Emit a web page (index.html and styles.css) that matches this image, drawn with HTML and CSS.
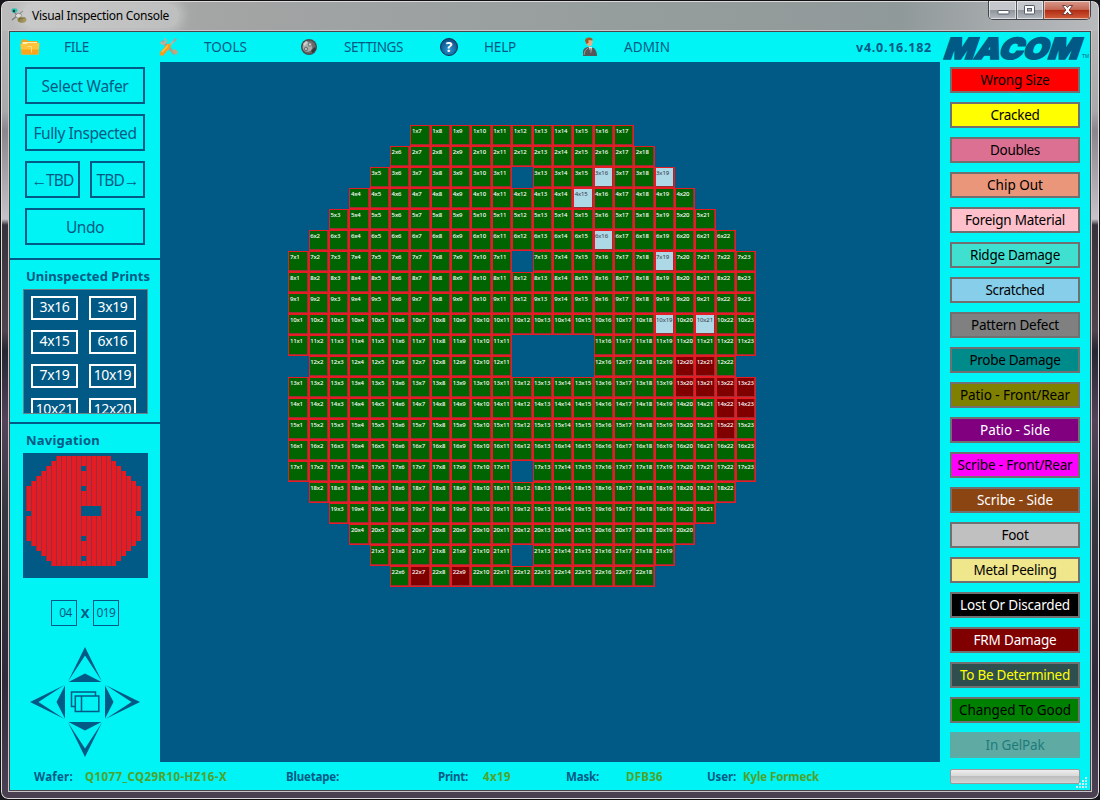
FILE: index.html
```html
<!DOCTYPE html>
<html lang="en">
<head>
<meta charset="utf-8">
<title>Visual Inspection Console</title>
<link rel="stylesheet" href="styles.css">
</head>
<body>
<div class="window">
  <header class="titlebar">
    <svg class="app-icon" width="17" height="17" viewBox="0 0 17 17">
      <path d="M2 13 13 4M4 5l8 8" stroke="#777" stroke-width="1.6"/>
      <ellipse cx="4.5" cy="3.5" rx="3" ry="2.3" fill="#16bfa5"/><circle cx="4" cy="4" r="1.2" fill="#123"/>
      <path d="M5 9l3-3 4 2-3 4z" fill="#ddd" stroke="#555" stroke-width=".6"/>
      <ellipse cx="12" cy="12.8" rx="4.5" ry="3" fill="#7b6a12"/><path d="M9 12l6-1" stroke="#3c3508"/>
    </svg>
    <span class="title"><span class="fit" data-w="137">Visual Inspection Console</span></span>
    <div class="controls">
      <div class="ctl"><svg width="28" height="17" viewBox="0 0 28 17"><rect x="9" y="8.500" width="11" height="3.500" rx=".6" fill="#fff" stroke="#555b68"/></svg></div>
      <div class="ctl"><svg width="26" height="17" viewBox="0 0 26 17"><rect x="7.500" y="3.500" width="10" height="8.500" rx=".7" fill="#fff" stroke="#555b68"/><rect x="10.500" y="6.500" width="4" height="2.500" fill="#a9adb5" stroke="#555b68"/></svg></div>
      <div class="ctl ctl-close"><svg width="46" height="17" viewBox="0 0 46 17"><path d="M18.500 3.500h3.200l1.800 2 1.800-2h3.200L25.200 8l3.300 4.500h-3.200l-1.800-2.200-1.800 2.200h-3.200L21.800 8z" fill="#fff" stroke="#5e3434" stroke-width=".9"/></svg></div>
    </div>
  </header>

  <div class="client">
    <nav class="menu">
      <div class="menu-item m-file">
        <svg width="20" height="18" viewBox="0 0 20 18"><path d="M1 3 2 1.500h5l1 1.500h9.500l.5 2V15H1.500z" fill="#e8a52a"/><path d="M2.500 4h14.500v3H2.500z" fill="#fff3b8"/><path d="M.3 6h6.200l1-1h12l-1 11.500H1.500z" fill="#ffc43a"/><path d="M.9 11.500h18l-.5 5H1.500z" fill="#fba51a"/><path d="M7.500 8.500h4v6" stroke="#ffdf80" fill="none"/></svg>
        <span class="fit" data-w="25">FILE</span>
      </div>
      <div class="menu-item m-tools">
        <svg width="20" height="20" viewBox="0 0 20 20"><path d="M3 4l13 13" stroke="#a9a08c" stroke-width="3"/><path d="M1 5q0 3 4 3l3-3Q8 1 5 1l1 3-2 1z" fill="#b5b2a5"/><path d="M13 14l4 4 2-3-3-3z" fill="#c7a675"/><path d="M10 9 17 2" stroke="#b4b4a8" stroke-width="2"/><path d="M16 1l2 1-2 3-2-1z" fill="#a0a69a"/><path d="M9.500 9 3 16.500" stroke="#f79d1e" stroke-width="4.400" stroke-linecap="round"/><path d="M9 8.500 3 15" stroke="#ffc54a" stroke-width="1.200"/></svg>
        <span class="fit" data-w="43">TOOLS</span>
      </div>
      <div class="menu-item m-settings">
        <svg width="18" height="18" viewBox="0 0 18 18"><circle cx="9" cy="9" r="8" fill="#4b4c4e"/><circle cx="9" cy="9" r="6.600" fill="#67696a"/><circle cx="7.500" cy="9" r="4.800" fill="#a9abab"/><circle cx="6" cy="11" r="2" fill="#65686a"/><circle cx="6" cy="11" r=".9" fill="#ddd"/><circle cx="10" cy="6.500" r="2.200" fill="#7c7e80"/><circle cx="10" cy="6.500" r="1" fill="#ddd"/><path d="M3 6l3-3 2 1-3 4z" fill="#d0d0d0"/><path d="M11 13l4-4 1 2-3 4z" fill="#333"/></svg>
        <span class="fit" data-w="59">SETTINGS</span>
      </div>
      <div class="menu-item m-help">
        <span class="help-dot">?</span>
        <span class="fit" data-w="32">HELP</span>
      </div>
      <div class="menu-item m-admin">
        <svg width="16" height="20" viewBox="0 0 16 20"><path d="M1 19v-5q1-4 6-4l5 1q3 3 3 8z" fill="#55585a"/><path d="M2 18q0-5 4-7" stroke="#9a9a98" fill="none"/><path d="M6.500 10h3.500l-1 6z" fill="#e8e8e8"/><path d="M8 11l1 5" stroke="#777"/><path d="M3.500 3.500Q4 .5 8 .8q3 .4 2.700 4.200-.4 4-2.800 4.400Q4 9 3.500 3.500z" fill="#e2b28c"/><path d="M3 4Q3 0 8 .5q3 .5 2.500 3L6.500 3v3L4.500 7z" fill="#9b5a26"/></svg>
        <span class="fit" data-w="46">ADMIN</span>
      </div>
      <div class="version"><span class="fit" data-w="76">v4.0.16.182</span></div>
      <svg class="logo" width="150" height="30" viewBox="0 0 150 30">
        <text class="logo-text" transform="translate(2.500 26.500) skewX(-19)" textLength="135" lengthAdjust="spacingAndGlyphs">MACOM</text>
        <text class="logo-tm" x="142" y="26" textLength="7" lengthAdjust="spacingAndGlyphs">TM</text>
      </svg>
    </nav>

    <div class="body">
      <aside class="left">
        <section class="actions">
          <button class="btn"><span class="fit" data-w="87">Select Wafer</span></button>
          <button class="btn"><span class="fit" data-w="103">Fully Inspected</span></button>
          <div class="btn-pair">
            <button class="btn"><span class="fit" data-w="42">←TBD</span></button>
            <button class="btn"><span class="fit" data-w="42">TBD→</span></button>
          </div>
          <button class="btn"><span class="fit" data-w="38">Undo</span></button>
        </section>
        <section class="prints">
          <h2><span class="fit" data-w="124">Uninspected Prints</span></h2>
          <div class="print-list">
            <span class="print">3x16</span><span class="print">3x19</span>
            <span class="print">4x15</span><span class="print">6x16</span>
            <span class="print">7x19</span><span class="print">10x19</span>
            <span class="print">10x21</span><span class="print">12x20</span>
          </div>
        </section>
        <section class="navigation">
          <h2><span class="fit" data-w="74">Navigation</span></h2>
          <svg class="mini-map" id="mini-map" width="125" height="125" viewBox="0 0 125 125"></svg>
          <div class="coords"><span class="coord first">04</span><b>X</b><span class="coord">019</span></div>
          <svg class="pad" width="110" height="110" viewBox="0 0 110 110">
            <g fill="#005a85">
              <path d="M55 0 72 34.500 55 8.500 38 34.500z"/><path d="M38.500 35 55 26.500 71.500 35z"/>
              <path d="M55 110 72 75.500 55 101.500 38 75.500z"/><path d="M38.500 75 55 83.500 71.500 75z"/>
              <path d="M0 55 34.500 38 8.500 55 34.500 72z"/><path d="M35 38.500 26.500 55 35 71.500z"/>
              <path d="M110 55 75.500 38 101.500 55 75.500 72z"/><path d="M75 38.500 83.500 55 75 71.500z"/>
            </g>
            <g fill="none" stroke="#005a85" stroke-width="1.500"><path d="M45 59.500h-3.500V45h24v4"/><rect x="45.300" y="49" width="23.500" height="15.500"/><path d="M51.500 49v15.500"/></g>
          </svg>
        </section>
      </aside>
      <main class="canvas"><div class="wafer" id="wafer"></div></main>
      <aside class="right" id="defects"></aside>
    </div>

    <footer class="status">
      <span class="s-label" style="width:51px"><span class="fit" data-w="39">Wafer:</span></span>
      <span class="s-value" style="width:201px"><span class="fit" data-w="142">Q1077_CQ29R10-HZ16-X</span></span>
      <span class="s-label" style="width:152px"><span class="fit" data-w="53">Bluetape:</span></span>
      <span class="s-label" style="width:45px"><span class="fit" data-w="30">Print:</span></span>
      <span class="s-value" style="width:83px"><span class="fit" data-w="28">4x19</span></span>
      <span class="s-label" style="width:60px"><span class="fit" data-w="33">Mask:</span></span>
      <span class="s-value" style="width:81px"><span class="fit" data-w="37">DFB36</span></span>
      <span class="s-label" style="width:36px"><span class="fit" data-w="29">User:</span></span>
      <span class="s-value"><span class="fit" data-w="76">Kyle Formeck</span></span>
      <div class="status-end"><div class="progress"></div>
        <svg class="grip" width="12" height="12" viewBox="0 0 12 12" fill="#cdeff0"><path d="M9 0h2v2H9zM9 3h2v2H9zM9 6h2v2H9zM9 9h2v2H9zM6 3h2v2H6zM6 6h2v2H6zM6 9h2v2H6zM3 6h2v2H3zM3 9h2v2H3zM0 9h2v2H0z"/></svg>
      </div>
    </footer>
  </div>
</div>
<script src="app.js"></script>
</body>
</html>
```
FILE: styles.css
```css
* { box-sizing: border-box; }
body { margin: 0; background: #17161c; font-family: "Noto Sans", "Open Sans", sans-serif; color: #005a85; }
.window {
  width: 1100px; height: 800px; padding: 0 8px 8px; overflow: hidden;
  display: flex; flex-direction: column;
  border: 1px solid #111; border-radius: 8px;
  background: linear-gradient(#b9b9b9 0, #a9a9ab 110px, #8b858c 130px, #c7c3c8 218px, #37323b 224px, #50444e 330px, #242632 350px, #54435a 420px, #353740 510px, #30293a 680px, #4a4051 790px);
  box-shadow: inset 0 0 0 1px #dcdadc;
}
.titlebar {
  height: 29px; margin: 1px -7px 0; padding-left: 8px; flex: none; display: flex; align-items: flex-start;
  border-radius: 7px 7px 0 0;
  background: linear-gradient(90deg, #bcbcbc, #a4a5a5 18%, #969e9d 55%, #909999 82%, #a9adaf 92%, #b8babc);
}
.app-icon { margin-top: 5px; }
.title { margin: 1px 0 0 -5px; padding: 2px 10px; height: 25px; line-height: 22px; font-size: 12px; color: #000; border-radius: 12px; background: rgba(225,225,225,.4); box-shadow: 0 0 10px 5px rgba(225,225,225,.4); }
.controls { margin: -1px 7px 0 auto; display: flex; height: 19px; border: 1px solid #42454c; border-top: 0; border-radius: 0 0 5px 5px; overflow: hidden; }
.ctl { width: 28px; border-right: 1px solid #55585e; box-shadow: inset 0 0 0 1px rgba(255,255,255,.55); background: linear-gradient(#c4c7cb 48%, #8e949a 50%, #b4babf); }
.ctl svg { display: block; margin: 1px auto 0; }
.ctl:nth-child(2) { width: 27px; }
.ctl-close { width: 46px; border-right: 0; background: linear-gradient(#d8998b 0, #c56956 47%, #ae2b12 50%, #d35d3c); }
.client { width: 1082px; height: 760px; flex: none; display: flex; flex-direction: column; border: 1px solid #4c4448; background: #00f4f6; box-shadow: 0 0 0 1px #c9c6c9; }
.fit { display: inline-block; white-space: nowrap; }

.menu { height: 30px; flex: none; display: flex; align-items: center; font-size: 13.500px; }
.menu-item { display: flex; align-items: center; width: 140px; }
.menu-item > .fit { margin-left: auto; }
.m-file { padding-left: 10px; width: 79px; }
.m-tools { width: 158px; padding-left: 70px; }
.m-settings { width: 156px; padding-left: 53px; }
.m-help { width: 113px; padding-left: 37px; }
.m-admin { width: 154px; padding-left: 66px; }
.help-dot { width: 18px; height: 18px; border: 1px solid #092c50; border-radius: 50%; background: radial-gradient(circle at 50% 65%, #2797d3, #124f86 75%); color: #fff; font: bold 14px/16px "Open Sans", sans-serif; text-align: center; }
.version { margin-left: auto; margin-right: 8px; font-size: 12.500px; font-weight: bold; }
.logo { display: block; flex: none; overflow: visible; }
.logo-text { font: 900 29px Inter, sans-serif; fill: #005a85; stroke: #005a85; stroke-width: 1.600; }
.logo-tm { font: 6px "Liberation Sans", sans-serif; fill: #005a85; }

.body { height: 700px; display: flex; flex: none; }
.left { width: 150px; }
.actions { height: 198px; padding: 5px 15px 0; border-bottom: 2px solid #005a85; display: flex; flex-direction: column; gap: 10px; }
.btn { height: 37px; width: 100%; padding: 0; border: 2px solid #005a85; background: none; color: #005a85; font: 15.500px "Noto Sans", sans-serif; white-space: nowrap; }
.btn-pair { display: flex; gap: 10px; }
h2 { margin: 0 0 0 16px; font-size: 13px; line-height: 20px; font-weight: bold; white-space: nowrap; }
.prints { height: 164px; padding-top: 6px; border-bottom: 2px solid #005a85; }
.print-list { width: 125px; height: 125px; margin: 3px 0 0 13px; padding: 6px 0 0 7px; border: 1px solid #697f86; background: #005a85; overflow: hidden; display: grid; grid-template-columns: 47px 47px; grid-auto-rows: 24px; gap: 10px 11px; align-content: start; }
.print { border: 2px solid #fff; color: #fff; font-size: 14px; line-height: 18px; text-align: center; letter-spacing: -.4px; }
.navigation { padding-top: 6px; }
.mini-map { display: block; margin: 3px 0 0 13px; background: #005a85; }
.coords { height: 26px; margin: 22px 0 0 41px; display: flex; align-items: center; }
.coord { width: 26px; height: 26px; border: 1px solid #005a85; font-size: 12px; line-height: 24px; text-align: center; letter-spacing: -.6px; }
.coord.first { padding-left: 3px; }
.coords b { width: 16px; text-align: center; font-size: 13px; }
.pad { display: block; margin: 21px 0 0 20px; }

.canvas { width: 780px; background: #005a85; padding: 63px 0 0 128.400px; }
.wafer { width: 468px; height: 462px; display: grid; grid-template-columns: repeat(23, 20.350px); grid-template-rows: repeat(22, 21px); }
.die { border: 1px solid #e61c24; background: #006400; color: #fff; font-size: 6px; line-height: 10px; padding-left: .5px; font-weight: 500; letter-spacing: -.15px; white-space: nowrap; box-shadow: inset -1px -1px 0 #963034; }
.die.open { background: #add8e6; color: #334; font-weight: 400; }
.die.bad { background: #800000; }

.right { width: 150px; padding: 5px 10px 0; display: flex; flex-direction: column; gap: 9px; }
.defect { height: 26px; flex: none; border: 2px solid #707070; font-size: 13.500px; line-height: 22px; text-align: center; white-space: nowrap; }
.defect.off { opacity: .5; border-color: #b3665a; }

.status { height: 28px; padding-left: 24px; display: flex; align-items: center; font-size: 11.500px; font-weight: bold; }
.s-label, .s-value { flex: none; white-space: nowrap; }
.s-value { color: #4ea32a; }
.status-end { position: relative; width: 150px; height: 28px; margin-left: auto; padding: 7px 10px 0; }
.progress { height: 15px; border: 1px solid #999; border-radius: 2px; background: linear-gradient(#eee, #d6d6d6 48%, #bebebe 50%, #d3d3d3); }
.grip { position: absolute; right: 2px; bottom: 1px; }
```
FILE: app.js
```js
const spans = [
  [7,17],[6,18],[5,19],[4,20],[3,21],[2,22],[1,23],[1,23],[1,23],[1,23],[1,23],
  [2,22],[1,23],[1,23],[1,23],[1,23],[1,23],[2,22],[3,21],[4,20],[5,19],[6,18]
];
const open = new Set(['3x16','3x19','4x15','6x16','7x19','10x19','10x21']);
const bad = new Set(['12x20','12x21','13x20','13x21','13x22','13x23','14x22','14x23','15x22','22x7','22x9']);
const isHole = (r, c) =>
  (c === 12 && [3, 7, 17, 21].includes(r)) || ((r === 11 || r === 12) && c >= 12 && c <= 15);

const wafer = document.getElementById('wafer');
let mini = '';
spans.forEach(([from, to], i) => {
  const r = i + 1;
  for (let c = from; c <= to; c++) {
    if (isHole(r, c)) continue;
    const id = r + 'x' + c;
    const die = document.createElement('div');
    die.className = 'die' + (open.has(id) ? ' open' : bad.has(id) ? ' bad' : '');
    die.style.gridArea = r + ' / ' + c;
    die.textContent = id;
    wafer.append(die);
    mini += `<rect x="${3 + (c - 1) * 5}" y="${3 + i * 5}" width="1" height="5" fill="#92303f"/>` +
            `<rect x="${4 + (c - 1) * 5}" y="${3 + i * 5}" width="4" height="5" fill="#e61c24"/>`;
  }
});
document.getElementById('mini-map').innerHTML = mini;

const defects = [
  ['Wrong Size', '#ff0000', '#000', 69], ['Cracked', '#ffff00', '#000', 49],
  ['Doubles', '#db7093', '#000', 50], ['Chip Out', '#e9967a', '#000', 56],
  ['Foreign Material', '#ffc0cb', '#000', 100], ['Ridge Damage', '#40e0d0', '#000', 90],
  ['Scratched', '#87ceeb', '#000', 59], ['Pattern Defect', '#808080', '#000', 88],
  ['Probe Damage', '#008b8b', '#000', 91], ['Patio - Front/Rear', '#808000', '#000', 110],
  ['Patio - Side', '#800080', '#fff', 70], ['Scribe - Front/Rear', '#ff00ff', '#000', 115],
  ['Scribe - Side', '#8b4513', '#fff', 76], ['Foot', '#c0c0c0', '#000', 27],
  ['Metal Peeling', '#f0e68c', '#000', 83], ['Lost Or Discarded', '#000000', '#fff', 110],
  ['FRM Damage', '#800000', '#fff', 83], ['To Be Determined', '#2f4f4f', '#ffff00', 110],
  ['Changed To Good', '#008000', '#000', 112], ['In GelPak', '#bd6350', '#400', 59]
];
const list = document.getElementById('defects');
defects.forEach(([name, bg, fg, w]) => {
  const el = document.createElement('div');
  el.className = 'defect' + (name === 'In GelPak' ? ' off' : '');
  el.style.background = bg;
  el.style.color = fg;
  el.innerHTML = `<span class="fit" data-w="${w}">${name}</span>`;
  list.append(el);
});

// Spread each label over its intended width through letter spacing.
document.querySelectorAll('.fit').forEach(el => {
  const n = el.textContent.length;
  const gap = (Number(el.dataset.w) - el.getBoundingClientRect().width) / n;
  el.style.letterSpacing = gap.toFixed(3) + 'px';
});
```
